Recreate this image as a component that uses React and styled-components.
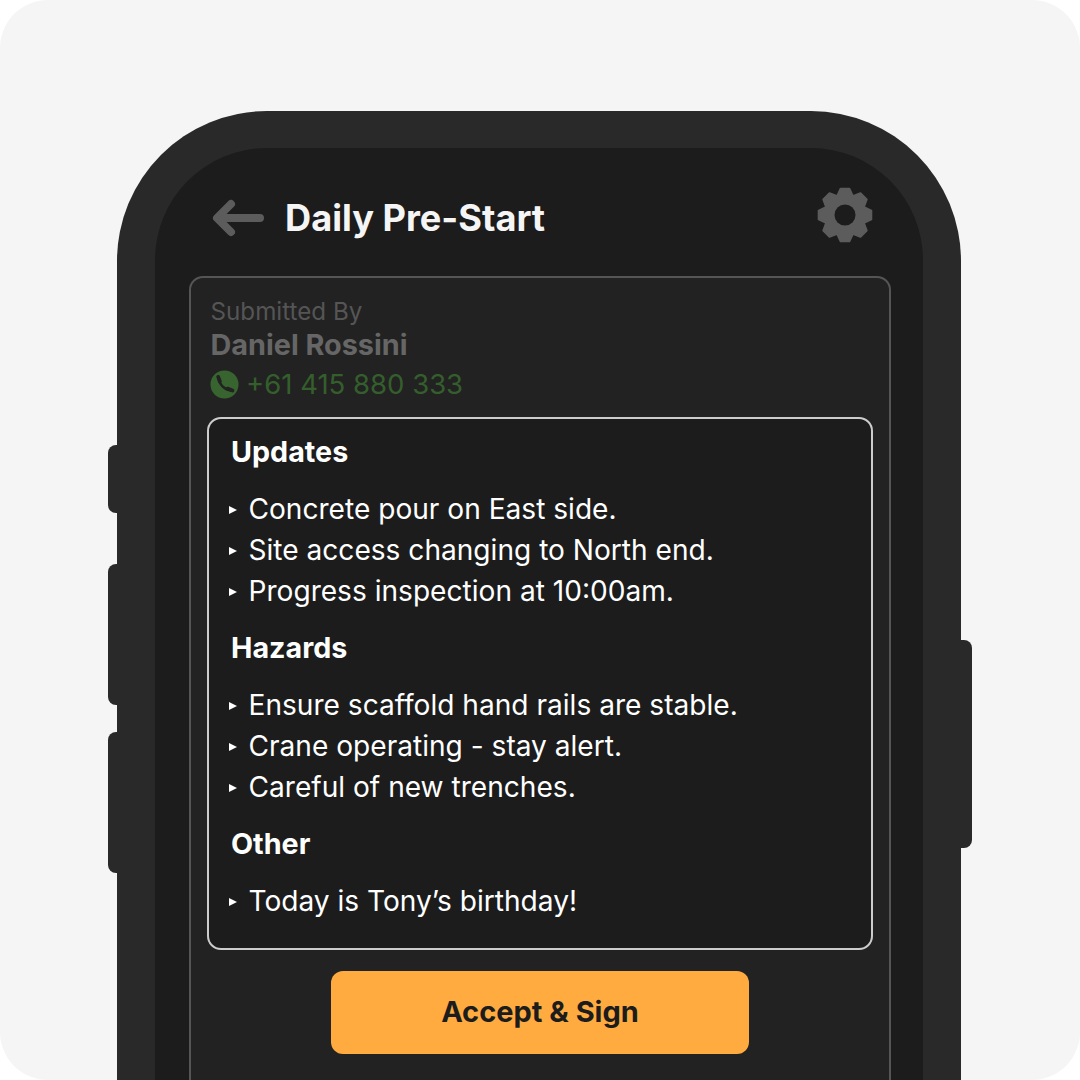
import React from "react";
import styled, { createGlobalStyle } from "styled-components";

const Global = createGlobalStyle`
  html, body { margin: 0; padding: 0; background: #fff; }
  body { width: 1080px; height: 1080px; overflow: hidden; font-family: Inter, "Liberation Sans", sans-serif; }
`;
const Card = styled.div`
  width: 1080px; height: 1080px; box-sizing: border-box; background: #f5f5f5;
  border-radius: 48px; padding-top: 111px; overflow: hidden;
`;
const Phone = styled.div`
  position: relative; width: 844px; height: 1100px; margin-left: 117px; box-sizing: border-box;
  background: #292929; border-radius: 150px 150px 0 0; padding: 37px 38px 0;
`;
const SideKey = styled.div`
  position: absolute; top: ${p => p.$top}px; height: ${p => p.$h}px; width: 11px; background: #292929;
  ${p => p.$right ? "right: -11px; border-radius: 0 8px 8px 0;" : "left: -9px; width: 9px; border-radius: 8px 0 0 8px;"}
`;
const Screen = styled.div`
  height: 1000px; box-sizing: border-box; background: #1c1c1c; border-radius: 112px 112px 0 0;
  padding: 0 32px 0 34px;
`;
const Header = styled.header`
  height: 128px; display: flex; align-items: center; padding: 12px 18px 0 23px; box-sizing: border-box;
`;
const Title = styled.h1`
  flex: 1; margin: 0 0 0 21px; font-size: 36.2px; line-height: 42px; font-weight: 700; color: #f5f5f5;
`;
const GearSvg = styled.svg` width: 56px; height: 56px; margin-top: -7px; `;
const Panel = styled.section`
  height: 900px; box-sizing: border-box; border: 2px solid #555; border-radius: 14px; background: #222;
  padding: 17px 16px 0;
`;
const Label = styled.div` font-size: 24.2px; line-height: 33px; color: #555; padding-left: 3.5px; `;
const Name = styled.div` font-size: 28.8px; line-height: 34px; font-weight: 700; color: #666; padding-left: 3.5px; `;
const PhoneRow = styled.div`
  display: flex; align-items: center; gap: 7px; padding-left: 3px; height: 44px;
  font-size: 27.5px; color: #345f2c;
`;
const Box = styled.div`
  height: 533px; box-sizing: border-box; margin-top: 11px; border: 2px solid #ccc; border-radius: 14px;
  background: #1c1c1c; padding: 12px 22px 0;
`;
const Heading = styled.h2`
  margin: 0 0 16px; font-size: 28.7px; line-height: 42px; font-weight: 700; color: #fff;
`;
const List = styled.ul` list-style: none; margin: 0 0 15px; padding: 0; `;
const Item = styled.li`
  display: flex; align-items: center; font-size: 28.1px; line-height: 41px; color: #fff;
  &::before {
    content: ""; width: 0; height: 0; margin: 0 11.5px 0 -2px;
    border-left: 8px solid #fff; border-top: 4.5px solid transparent; border-bottom: 4.5px solid transparent;
  }
`;
const Accept = styled.button`
  display: block; width: 418px; height: 83px; margin: 21px auto 0; padding: 0 0 2px; border: 0; border-radius: 12px;
  background: #ffab40; color: #1c1c1c; font: 700 29px Inter, sans-serif;
`;

const gearPath = (() => {
  const pts = [];
  for (let i = 0; i < 8; i++) {
    const a = (i * Math.PI) / 4 - Math.PI / 2;
    const at = (r, off) => {
      const x = 28 + r * Math.cos(a) + off * -Math.sin(a);
      const y = 28 + r * Math.sin(a) + off * Math.cos(a);
      return `${x.toFixed(2)} ${y.toFixed(2)}`;
    };
    pts.push(at(19.5, -7.5), at(26.3, -4.4), at(26.3, 4.4), at(19.5, 7.5));
  }
  return `M${pts.join("L")}Z`;
})();
const Gear = () => (
  <GearSvg viewBox="0 0 56 56">
    <path d={gearPath} fill="#5c5c5c" stroke="#5c5c5c" strokeWidth="2" strokeLinejoin="round" />
    <circle cx="28" cy="28" r="10.5" fill="#1c1c1c" />
  </GearSvg>
);
const Back = () => (
  <svg width="52" height="38" viewBox="0 0 52 38" fill="none" stroke="#5c5c5c" strokeWidth="8" strokeLinecap="round" strokeLinejoin="round">
    <path d="M48 19H6M19 5L5 19l14 14" />
  </svg>
);
const CallIcon = () => (
  <svg width="29" height="29" viewBox="0 0 29 29" fill="none" stroke="#222" strokeLinecap="round">
    <circle cx="14.5" cy="14.5" r="14" fill="#38652f" stroke="none" />
    <path strokeWidth="2.4" d="M8.6 8.5C9 14 14.5 20 21 20.6" />
    <path strokeWidth="3.8" d="M8.2 6.9l1.7 4.6M17.6 18.6l4.9 2" />
  </svg>
);
const sections = [
  ["Updates", ["Concrete pour on East side.", "Site access changing to North end.", "Progress inspection at 10:00am."]],
  ["Hazards", ["Ensure scaffold hand rails are stable.", "Crane operating - stay alert.", "Careful of new trenches."]],
  ["Other", ["Today is Tony’s birthday!"]],
];

export default function App() {
  return (
    <>
      <Global />
      <Card>
        <Phone>
          <SideKey $top={334} $h={68} />
          <SideKey $top={453} $h={141} />
          <SideKey $top={621} $h={141} />
          <SideKey $right $top={529} $h={208} />
          <Screen>
            <Header>
              <Back />
              <Title>Daily Pre-Start</Title>
              <Gear />
            </Header>
            <Panel>
              <Label>Submitted By</Label>
              <Name>Daniel Rossini</Name>
              <PhoneRow><CallIcon />+61 415 880 333</PhoneRow>
              <Box>
                {sections.map(([h, items]) => (
                  <React.Fragment key={h}>
                    <Heading>{h}</Heading>
                    <List>{items.map(t => <Item key={t}>{t}</Item>)}</List>
                  </React.Fragment>
                ))}
              </Box>
              <Accept>Accept &amp; Sign</Accept>
            </Panel>
          </Screen>
        </Phone>
      </Card>
    </>
  );
}
